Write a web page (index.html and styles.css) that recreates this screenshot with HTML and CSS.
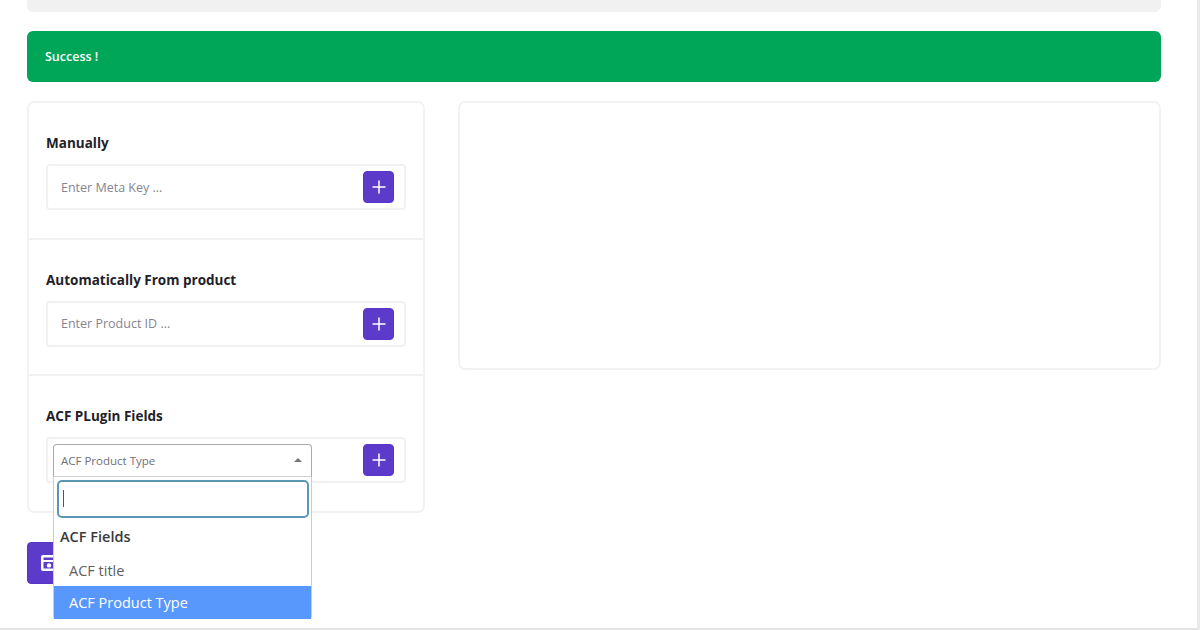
FILE: index.html
```html
<!DOCTYPE html>
<html lang="en">
<head>
<meta charset="utf-8">
<title>Meta fields</title>
<link rel="stylesheet" href="styles.css">
</head>
<body>
<div class="page">
  <div class="topbar"></div>
  <div class="alert">Success !</div>
  <div class="columns">
    <div class="left">
      <div class="card">
        <section class="section">
          <h3 class="label">Manually</h3>
          <div class="field">
            <input class="text" type="text" placeholder="Enter Meta Key ...">
            <button class="add" type="button" aria-label="Add"><svg width="14" height="14" viewBox="0 0 14 14"><path d="M7 0.5V13.5M0.5 7H13.5" stroke="#fff" stroke-width="1.5" fill="none"/></svg></button>
          </div>
        </section>
        <section class="section">
          <h3 class="label">Automatically From product</h3>
          <div class="field">
            <input class="text" type="text" placeholder="Enter Product ID ...">
            <button class="add" type="button" aria-label="Add"><svg width="14" height="14" viewBox="0 0 14 14"><path d="M7 0.5V13.5M0.5 7H13.5" stroke="#fff" stroke-width="1.5" fill="none"/></svg></button>
          </div>
        </section>
        <section class="section">
          <h3 class="label">ACF PLugin Fields</h3>
          <div class="field">
            <div class="select-wrap">
              <div class="select">
                <span>ACF Product Type</span>
                <i class="caret"></i>
              </div>
              <div class="dropdown">
                <div class="search"><i class="cursor"></i></div>
                <div class="group">ACF Fields</div>
                <div class="option">ACF title</div>
                <div class="option active">ACF Product Type</div>
              </div>
            </div>
            <button class="add" type="button" aria-label="Add"><svg width="14" height="14" viewBox="0 0 14 14"><path d="M7 0.5V13.5M0.5 7H13.5" stroke="#fff" stroke-width="1.5" fill="none"/></svg></button>
          </div>
        </section>
      </div>
      <button class="save" type="button" aria-label="Save"><svg width="18" height="18" viewBox="0 0 18 18"><path fill="#fff" fill-rule="evenodd" d="M3 1H15A2 2 0 0 1 17 3V15A2 2 0 0 1 15 17H3A2 2 0 0 1 1 15V3A2 2 0 0 1 3 1ZM3.5 3.5V6H14.5V3.5ZM3.5 8V14.5H14.5V8Z"/><circle cx="9" cy="11.4" r="2.2" fill="#fff"/></svg></button>
    </div>
    <div class="card right"></div>
  </div>
</div>
</body>
</html>
```
FILE: styles.css
```css
* { box-sizing: border-box; }
html, body { margin: 0; height: 100%; }
body {
  background: #fff;
  font-family: "Open Sans", "Noto Sans", sans-serif;
  color: #212529;
  overflow: hidden;
}
.page {
  height: 630px;
  padding: 0 36px 0 27px;
  border-right: 3px solid #e9e9e9;
  border-bottom: 2px solid #e4e4e4;
}
.topbar {
  height: 12px;
  background: #f1f1f1;
  border-radius: 0 0 6px 6px;
}
.alert {
  margin-top: 19px;
  height: 51px;
  padding-left: 18px;
  display: flex;
  align-items: center;
  background: #00a658;
  color: #fff;
  font-size: 12.5px;
  font-weight: 600;
  border-radius: 6px;
}
.columns {
  margin-top: 19px;
  display: flex;
  gap: 33px;
  align-items: flex-start;
}
.left { width: 398px; flex: none; }
.card {
  background: #fff;
  border: 2px solid #f2f2f2;
  border-radius: 7px;
}
.right { flex: 1; height: 269px; }
.section {
  height: 136.5px;
  padding: 30px 17px 0 17px;
  border-bottom: 2px solid #f1f1f1;
}
.section:last-child { border-bottom: 0; height: 134.5px; }
.label {
  margin: 0 0 11px;
  font-size: 13.5px;
  line-height: 20px;
  font-weight: 700;
  color: #1f2129;
}
.field {
  height: 46px;
  padding: 0 10px 0 13px;
  display: flex;
  align-items: center;
  justify-content: space-between;
  border: 2px solid #f1f1f1;
  border-radius: 4px;
  background: #fff;
}
.section:last-child .field { padding-left: 5px; }
.text {
  flex: 1;
  min-width: 0;
  border: 0;
  outline: 0;
  padding: 0;
  background: transparent;
  font: 12.5px "Open Sans", "Noto Sans", sans-serif;
}
.text::placeholder { color: #85858f; opacity: 1; }
.add {
  width: 31px;
  height: 32px;
  flex: none;
  padding: 0;
  display: flex;
  align-items: center;
  justify-content: center;
  background: #5c3bca;
  border: 1px solid #5a34c8;
  border-radius: 4px;
}
.select-wrap { position: relative; width: 259px; }
.select {
  height: 33px;
  padding: 0 9px 0 7px;
  display: flex;
  align-items: center;
  justify-content: space-between;
  border: 1px solid #aaa;
  border-bottom-color: #d0d0d0;
  border-radius: 4px 4px 0 0;
  font-size: 11.5px;
  color: #70707a;
}
.caret {
  width: 0;
  height: 0;
  border-left: 4px solid transparent;
  border-right: 4px solid transparent;
  border-bottom: 4px solid #777;
}
.dropdown {
  position: absolute;
  z-index: 2;
  top: 33px;
  left: 0;
  width: 259px;
  height: 142px;
  padding-top: 3px;
  background: #fff;
  border: 1px solid #ccc;
  border-top: 0;
  border-radius: 0 0 3px 3px;
}
.search {
  height: 38px;
  margin: 0 2px 0 3px;
  padding-left: 4px;
  display: flex;
  align-items: center;
  border: 2px solid #5b97b4;
  border-radius: 5px;
}
.cursor { width: 1px; height: 17px; background: #555; }
.group {
  height: 37px;
  padding-left: 6px;
  display: flex;
  align-items: center;
  font-size: 14.5px;
  font-weight: 600;
  color: #3a3a3a;
}
.option {
  height: 31px;
  padding-left: 15px;
  display: flex;
  align-items: center;
  font-size: 14.5px;
  color: #5f5f5f;
}
.active { height: 33px; background: #5897fb; color: #fff; }
.save {
  margin-top: 29px;
  width: 120px;
  height: 42px;
  padding: 0 0 0 12px;
  display: flex;
  align-items: center;
  background: #5c3bca;
  border: 1px solid #5a34c8;
  border-radius: 4px;
}
```
